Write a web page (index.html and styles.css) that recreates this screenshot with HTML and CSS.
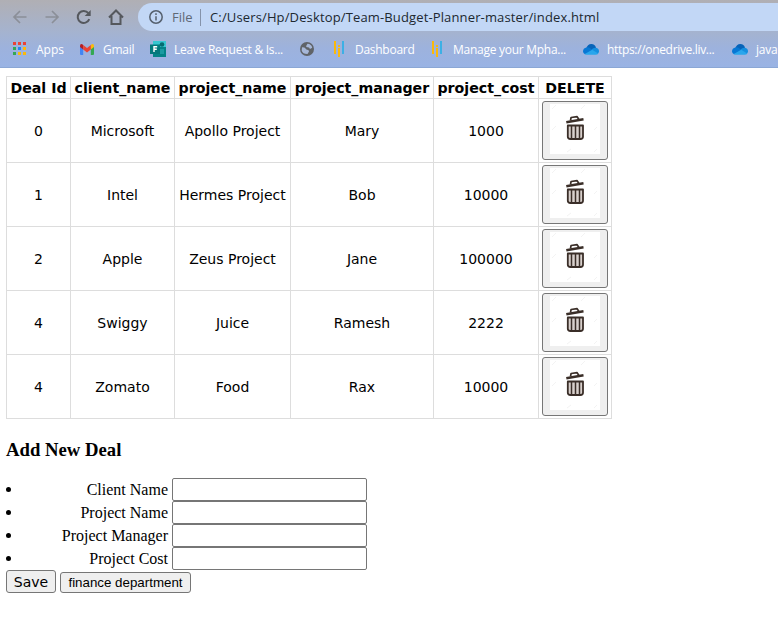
FILE: index.html
```html
<!DOCTYPE html>
<html lang="en">
<head>
<meta charset="utf-8">
<title>Team Budget Planner</title>
<link rel="stylesheet" href="styles.css">
</head>
<body>
<svg class="defs" width="0" height="0">
  <symbol id="trash" viewBox="0 0 50 50">
    <g fill="none" stroke="#f3f3f3" stroke-width="1"><path d="M2 5l4-4M31 5l4-4M2 26l4-4M44 26l3-3M17 48l4-3M44 48l3-3"/></g>
    <g fill="none" stroke="#3a2e28" stroke-linejoin="round">
      <path d="M16.300 18.200L33.500 15.300" stroke-width="2.600"/>
      <path d="M20.500 16.500l.6-3 6-.8 1.700 2.600" stroke-width="1.700"/>
      <path d="M17.800 21.500H33v11.300q0 2.200-2.500 2.200H20.500q-2.700 0-2.700-2.200z" fill="#d8d0cc" stroke-width="1.800"/>
      <path d="M21.500 22v13M25.500 22v13M29.500 22v13" stroke-width="1.500"/>
    </g>
  </symbol>
  <symbol id="cloud" viewBox="0 0 16 11">
    <path d="M3 5Q4.500 0 8.300 0q3.700 0 4.700 3.700L9 7z" fill="#0763b8"/>
    <path d="M0 7.500Q0 4 3.500 3.400q2-.3 3.700.9l5 4L2 10.200Q0 9.300 0 7.500z" fill="#0877d4"/>
    <path d="M8.500 5.500Q10.500 3.300 13 3.700q3 .5 3 3.500 0 1.700-1.500 3l-4-2.200z" fill="#148edf"/>
    <path d="M1.700 10L9.200 5.800l6 3.800q-1 1.200-2.500 1.200H3.500q-1.200 0-1.800-.8z" fill="#29a6ec"/>
  </symbol>
  <symbol id="bars" viewBox="0 0 11 16">
    <path d="M0 0h2v13H0zM4 4h2v2H4zM4 7h2v9H4z" fill="#fbb90b"/><path d="M8 0h2v13H8z" fill="#3cb0e5"/>
  </symbol>
</svg>
<header class="browser">
  <nav class="toolbar">
    <svg class="nav dim" viewBox="0 0 16 16"><path d="M14.500 8H2M8 2L2 8l6 6"/></svg>
    <svg class="nav dim" viewBox="0 0 16 16"><path d="M1.500 8H14M8 2l6 6-6 6"/></svg>
    <svg class="nav" viewBox="0 0 16 16"><path d="M13.300 10.200A6 6 0 1 1 12.400 4.200"/><path d="M14.700 1v6h-6z" class="solid"/></svg>
    <svg class="nav" viewBox="0 0 16 16"><path d="M1 8.500L8 1.500l7 7M3.500 7v8h9V7"/></svg>
    <div class="address">
      <svg class="info" viewBox="0 0 14 14"><circle cx="7" cy="7" r="6.200"/><path d="M7 6.200v4.300M7 3.300v1.700"/></svg>
      <span class="scheme">File</span>
      <span class="url">C:/Users/Hp/Desktop/Team-Budget-Planner-master/index.html</span>
    </div>
  </nav>
  <nav class="bookmarks">
    <a class="mark"><svg width="13" height="14" viewBox="0 0 13 14"><path d="M0 0h3v3H0zM5 0h3v3H5zM10 0h3v3h-3z" fill="#ea4335"/><path d="M0 5h3v3H0zM0 10h3v3H0z" fill="#34a853"/><path d="M5 5h3v3H5z" fill="#2185f4"/><path d="M10 5h3v3h-3zM5 10h3v3H5zM10 10h3v3h-3z" fill="#fbb90b"/></svg><span class="t-apps">Apps</span></a>
    <a class="mark"><svg width="14" height="11" viewBox="0 0 14 11"><path d="M0 2l3.200 2.300V11H1q-1 0-1-1z" fill="#4285f4"/><path d="M14 2l-3.200 2.300V11H13q1 0 1-1z" fill="#34a853"/><path d="M10.800 1l1-.8Q14-.5 14 2v1L10.800 5.500z" fill="#fbb90b"/><path d="M3.200 1l-1-.8Q0-.5 0 2v1l3.200 2.500z" fill="#b51f25"/><path d="M3.200 1L7 4l3.800-3v4.500L7 8.500l-3.800-3z" fill="#ea4335"/></svg><span class="t-gmail">Gmail</span></a>
    <a class="mark"><svg width="16" height="16" viewBox="0 0 16 16"><path d="M3 0h13v16H3z" fill="#038387"/><path d="M3 0h13v6H3z" fill="#37c6d0"/><circle cx="12" cy="3.500" r="2.300" fill="#036c70"/><path d="M10 8h4v5h-4z" fill="#1a9ba1"/><path d="M0 3.500h10V13H0z" fill="#03787c"/><path d="M4 11V5.700h3.200M4 8.300h2.800" fill="none" stroke="#fff" stroke-width="1.400"/></svg><span class="t-leave">Leave Request &amp; Is...</span></a>
    <a class="mark"><svg width="14" height="14" viewBox="0 0 14 14"><circle cx="7" cy="7" r="7" fill="#5f6368"/><path d="M2 5.200q3 0 3.500 1.300T8 8q1 0 1 1.500l-1.500 2.600Q2.500 12 1.700 8.500zM7.500 1.700q4 .3 4.700 4L10 7 9 5.500 6.200 5l.2-1.500z" fill="#a6b7d8"/></svg></a>
    <a class="mark"><svg width="11" height="16"><use href="#bars"/></svg><span class="t-dash">Dashboard</span></a>
    <a class="mark"><svg width="11" height="16"><use href="#bars"/></svg><span class="t-manage">Manage your Mpha...</span></a>
    <a class="mark"><svg width="16" height="11"><use href="#cloud"/></svg><span class="t-drive">https://onedrive.liv...</span></a>
    <a class="mark"><svg width="16" height="11"><use href="#cloud"/></svg><span class="t-java">java</span></a>
  </nav>
</header>
<main>
  <table>
    <colgroup><col class="c1"><col class="c2"><col class="c3"><col class="c4"><col class="c5"><col class="c6"></colgroup>
    <thead><tr><th>Deal Id</th><th>client_name</th><th>project_name</th><th>project_manager</th><th>project_cost</th><th>DELETE</th></tr></thead>
    <tbody>
      <tr><td>0</td><td>Microsoft</td><td>Apollo Project</td><td>Mary</td><td>1000</td><td><button class="delete" aria-label="Delete"><svg><use href="#trash"/></svg></button></td></tr>
      <tr><td>1</td><td>Intel</td><td>Hermes Project</td><td>Bob</td><td>10000</td><td><button class="delete" aria-label="Delete"><svg><use href="#trash"/></svg></button></td></tr>
      <tr><td>2</td><td>Apple</td><td>Zeus Project</td><td>Jane</td><td>100000</td><td><button class="delete" aria-label="Delete"><svg><use href="#trash"/></svg></button></td></tr>
      <tr><td>4</td><td>Swiggy</td><td>Juice</td><td>Ramesh</td><td>2222</td><td><button class="delete" aria-label="Delete"><svg><use href="#trash"/></svg></button></td></tr>
      <tr><td>4</td><td>Zomato</td><td>Food</td><td>Rax</td><td>10000</td><td><button class="delete" aria-label="Delete"><svg><use href="#trash"/></svg></button></td></tr>
    </tbody>
  </table>
  <h3>Add New Deal</h3>
  <ul>
    <li><label for="client">Client Name</label><input id="client"></li>
    <li><label for="project">Project Name</label><input id="project"></li>
    <li><label for="manager">Project Manager</label><input id="manager"></li>
    <li><label for="cost">Project Cost</label><input id="cost"></li>
  </ul>
  <div class="actions"><button class="save">Save</button><button class="finance">finance department</button></div>
</main>
</body>
</html>
```
FILE: styles.css
```css
* { box-sizing: border-box; }
body { margin: 0; background: #fff; color: #000; overflow: hidden; font-family: "Liberation Serif", serif; }
.defs { position: absolute; }
.browser { height: 68px; background: linear-gradient(#b0afb4 0, #a5b3cf 32px, #9db2dd 48px, #99b3e4 67px); border-bottom: 1px solid #8ba7d5; font-family: "Open Sans", "Noto Sans", sans-serif; }
.toolbar { height: 31px; padding: 3px 0 0 12px; display: flex; align-items: center; }
.nav { width: 16px; height: 16px; margin-right: 16px; flex: none; fill: none; stroke: #55585d; stroke-width: 2; }
.nav .solid { fill: #55585d; stroke: none; }
.nav.dim { stroke: #8b8f98; stroke-width: 1.700; }
.address { height: 28px; width: 660px; margin-left: -2px; padding-left: 11px; flex: none; display: flex; align-items: center; background: #c2d7f6; border-radius: 14px 0 0 14px; font-size: 13px; white-space: nowrap; }
.info { width: 14px; height: 14px; margin-right: 9px; fill: none; stroke: #55606e; stroke-width: 1.500; }
.scheme { width: 29px; height: 17px; line-height: 17px; color: #5f6875; border-right: 1px solid #8593aa; }
.url { margin-left: 9px; color: #202830; letter-spacing: 0.140px; }
.bookmarks { height: 36px; padding-left: 13px; display: grid; grid-template-columns: 67px 70px 150px 34px 98px 151px 149px 46px; }
.mark { display: flex; align-items: center; gap: 8px; color: #fff; font-size: 12px; white-space: nowrap; overflow: hidden; letter-spacing: -0.270px; }
.mark svg { flex: none; }
.t-apps { margin-left: 2px; letter-spacing: 0; }
.t-gmail { margin-left: 1px; }
.t-dash, .t-manage { margin-left: 2px; }
.t-drive { letter-spacing: -0.330px; }

main { padding: 8px 6px; }
table { width: 606px; table-layout: fixed; border-collapse: collapse; font-family: "DejaVu Sans", sans-serif; font-size: 14px; }
.c1 { width: 64px; } .c2 { width: 104px; } .c3 { width: 116px; } .c4 { width: 143px; } .c5 { width: 105px; } .c6 { width: 73px; }
th, td { padding: 0; border: 1px solid #ddd; text-align: center; white-space: nowrap; }
th { height: 22px; padding-top: 2px; line-height: 19px; font-size: 14.200px; }
td { height: 64px; }
.delete { display: block; width: 66px; height: 59px; margin: 0 auto; padding: 2px 7px 6px; background: #efefef; border: 1px solid #767676; border-radius: 3px; }
.delete svg { display: block; width: 50px; height: 50px; background: #fff; }
h3 { margin: 20px 0 18px; font-size: 18.720px; line-height: 21px; }
ul { margin: 0; padding: 0; list-style: none; }
li { height: 23px; display: flex; align-items: center; font-size: 16px; }
li::before { content: ""; width: 5px; height: 5px; margin-right: 1px; border-radius: 50%; background: #000; }
label { width: 156px; text-align: right; margin-right: 4px; }
input { width: 195px; height: 23px; border: 1px solid #767676; border-radius: 2px; }
.actions { display: flex; align-items: flex-end; gap: 4px; }
.actions button { padding: 0; color: #000; background: #efefef; border: 1px solid #767676; border-radius: 3px; }
.save { width: 50px; height: 23px; font: 14px "DejaVu Sans", sans-serif; }
.finance { width: 131px; height: 21px; font: 13.333px "Liberation Sans", sans-serif; }
```
